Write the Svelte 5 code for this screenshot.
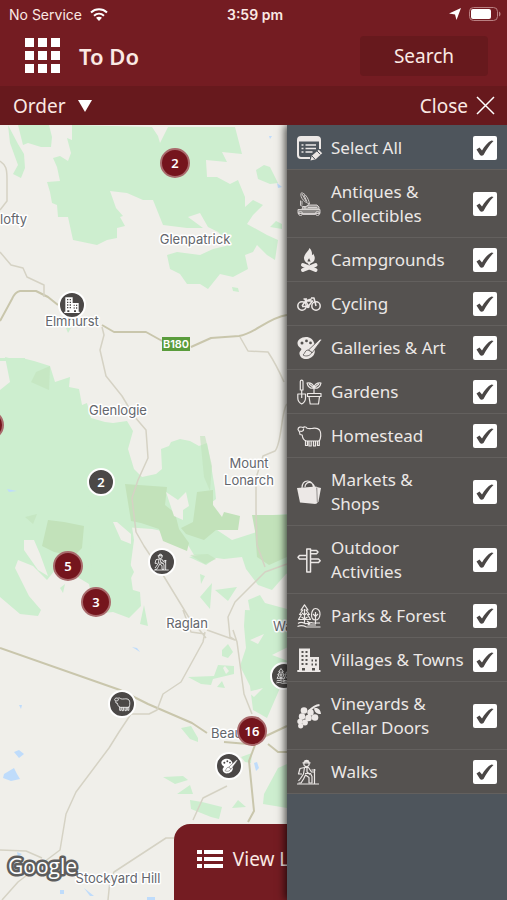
<script>
  let panelOpen = $state(true);

  // Filter categories shown in the side panel
  let categories = $state([
    { name: "Antiques & Collectibles", icon: "antiques", checked: true },
    { name: "Campgrounds", icon: "camp", checked: true },
    { name: "Cycling", icon: "cycling", checked: true },
    { name: "Galleries & Art", icon: "art", checked: true },
    { name: "Gardens", icon: "garden", checked: true },
    { name: "Homestead", icon: "sheep", checked: true },
    { name: "Markets & Shops", icon: "bag", checked: true },
    { name: "Outdoor Activities", icon: "sign", checked: true },
    { name: "Parks & Forest", icon: "forest", checked: true },
    { name: "Villages & Towns", icon: "town", checked: true },
    { name: "Vineyards & Cellar Doors", icon: "grapes", checked: true },
    { name: "Walks", icon: "walk", checked: true },
  ]);

  let allChecked = $derived(categories.every((c) => c.checked));

  // Markers, positioned from the top left of the map
  const markers = [
    { x: 175, y: 38, count: 2, cluster: true },
    { x: 72, y: 180, icon: "town", label: "Elmhurst" },
    { x: -11, y: 300, cluster: true, label: "More places" },
    { x: 101, y: 357, count: 2 },
    { x: 68, y: 441, count: 5, cluster: true },
    { x: 96, y: 477, count: 3, cluster: true },
    { x: 162, y: 437, icon: "walk", label: "Walk" },
    { x: 122, y: 579, icon: "sheep", label: "Homestead" },
    { x: 284, y: 551, icon: "forest", label: "Forest" },
    { x: 252, y: 606, count: 16, cluster: true },
    { x: 229, y: 641, icon: "art", label: "Gallery" },
  ];

  const places = [
    { x: 0, y: 99, name: "lofty", anchor: "start" },
    { x: 195, y: 119, name: "Glenpatrick" },
    { x: 72, y: 201, name: "Elmhurst" },
    { x: 118, y: 290, name: "Glenlogie" },
    { x: 249, y: 343, name: "Mount" },
    { x: 249, y: 360, name: "Lonarch" },
    { x: 187, y: 503, name: "Raglan" },
    { x: 273, y: 506, name: "Waubra", anchor: "start" },
    { x: 211, y: 613, name: "Beaufort", anchor: "start" },
    { x: 118, y: 758, name: "Stockyard Hill" },
  ];

  function toggleAll() {
    const next = !allChecked;
    categories.forEach((c) => (c.checked = next));
  }
</script>

{#snippet icon(name)}
  <svg class="icon" viewBox="0 0 24 24" aria-hidden="true">
    {#if name === "list"}
      <path d="M13 22H4a3 3 0 0 1-3-3V4a3 3 0 0 1 3-3h16a3 3 0 0 1 3 3v9" class="line bold" />
      <path d="M1 2h22v3.500H1z" />
      <path d="M4.500 9h2M8.500 9h10.500M4.500 12.500h2M8.500 12.500h10.500M4.500 16h2M8.500 16h7" class="line" />
      <path d="M13.500 24.500l1.300-4.800 7-6 3.400 3.500-6.500 6z" />
      <path d="M20 15l3.300 3.400M15 20l3 3.200" stroke="#4e555c" />
    {:else if name === "antiques"}
      <g class="line thin" opacity=".9">
        <path d="M4.500.8c-2 2 .5 9 8 11M4.500.8c3 .2 7 5 8 11M5 2l4 7M7 3l3 7M12.500 12l-3 2.500" />
        <path d="M3.500 8.500v5l5 2M5 8.800v4" />
        <path d="M9 14.500l2-1.500h9l2 2v2H5l1-2.500z" fill="currentColor" fill-opacity=".5" />
        <path d="M1 17.500h22v4H1z" fill="currentColor" fill-opacity=".4" />
        <circle cx="3.500" cy="21.500" r="2" />
        <circle cx="20.500" cy="21.500" r="2" />
        <path d="M5.500 22.500h13M11 15.500h9M8 15v2" />
      </g>
    {:else if name === "camp"}
      <path d="M12.500 0c-.8 3-5 5.500-5.500 9.500-.3 3.300 2 5.500 3.800 5.800-.6-2 0-3.500 1.400-5 .3 1.800 2.100 3 1.300 5 2.200-.5 4.700-2.500 4.200-6-.3-1.800-1-2.500-1.500-3.800-.3 1-.7 1.500-1.300 1.800C15.300 4.500 14.500 2 12.500 0z" />
      <path d="M6 17l12.500 5M18.500 17L6 22" stroke="currentColor" stroke-width="4" stroke-linecap="round" />
      <path d="M9.500 13.500l2.700 4 2.700-4z" />
    {:else if name === "cycling"}
      <g class="line">
        <circle cx="5" cy="14" r="4.200" />
        <circle cx="19" cy="14" r="4.200" />
        <path d="M5 14l3.500-5h7L11 14.500H5M8 7.500l3.500 7M14 6H17L19 14M6.500 7h3.500M8.500 9l6-2" />
        <circle cx="11" cy="14.500" r="1" />
      </g>
    {:else if name === "art"}
      <path
        fill-rule="evenodd"
        d="M9 1C4 1 .3 4 .5 7.500c.2 2.600 2 3.500 3.500 5s-2 2.500-1.500 5.500C3 21.500 6.500 23.500 10 23c4.500-.6 8-4 7.800-8-.1-1.500-.8-2.500-1.800-3.500l1.500-3.500C16.500 3.500 13 1 9 1zM5 5.500a1.500 1.500 0 1 0 0 3 1.500 1.500 0 0 0 0-3zM9.500 3.500a1.400 1.400 0 1 0 0 2.800 1.400 1.400 0 0 0 0-2.800zM13.500 5.500a1.400 1.400 0 1 0 0 2.800 1.400 1.400 0 0 0 0-2.800z"
      />
      <path d="M25 3.500L15 17l-3.500-3L23 3z" stroke="#555250" stroke-width=".8" />
      <path d="M11 14c-3 0-3 3.500-5 5 3 2 8 .8 8.800-3z" stroke="#555250" stroke-width=".8" />
    {:else if name === "garden"}
      <g class="line mid">
        <path d="M3.300 1.500a1.300 1.300 0 0 1 2.700 0v8.500H3.300zM4.700 10v8M.8 14h7.700v4c0 3-2 5-3.800 6-1.900-1-3.900-3-3.900-6z" />
        <path d="M10.500 13.500H24v3H10.500zM12 16.500h10.500L21.500 24h-8.300z" />
        <path d="M17 13V7.500M17 8c0-3.500-3-5.500-7-5C10.500 6.500 13.500 9 17 8zM17 8c0-3.500 3-5.500 7-5C23.500 6.500 20.500 9 17 8zM12 4l5 4M22 4l-5 4" />
      </g>
    {:else if name === "sheep"}
      <g class="line mid">
        <path d="M2.500 8L1 5.500C1 3 4 2.500 6 3.500c1.500-1 3.500-.5 4 .7 2 .6 3.500.3 5.500.2 2.500-.4 5.500-.2 7 1.600 1.500 2 1.300 6 .8 8.500l-1 2.500H9.500c-2.500-.5-4-3-4.300-6L3 10.500z" />
        <path d="M2.500 7c2.500 1 4.500 0 4-2.500" />
        <path d="M8.500 16v5.500h2V17M12 17v5h2.200v-5M16.500 17v5h2v-5M20.500 17v4.500h1.800V16" />
      </g>
    {:else if name === "bag"}
      <path d="M0 8l19.500-1.500L21 21l-2.500 3L3 22.500z" />
      <path d="M19.500 7l4.500 1-2.500 13.500-2.500 2.500z" />
      <path d="M19.800 8l.5 14" stroke="#555250" stroke-width=".6" />
      <path d="M5 8c0-4 2-7 5.500-7S16 3.500 16.500 7.500M8 7c0-3 2.500-5 5-4.500s4 2.500 4.500 4.500" class="line mid" />
    {:else if name === "sign"}
      <g class="line">
        <path d="M9.800 24V1h3.700v23z" />
        <path d="M13.500 2.500h6L21 4l-1.500 1.800h-6M9.800 7.500H2.500L1 9.200 2.500 11h7.300M13.500 11h8l1.700 1.700-1.700 1.800h-8" />
      </g>
    {:else if name === "forest"}
      <g class="line mid">
        <path d="M7.500.8L4 6h1.800L2.500 10.500h2L1.500 15.500h12L10.500 10.500h2L9 6h2zM7.500 5v14M5 9l2.500 2 2.500-2M4.500 13l3 2 3-2" />
        <path d="M18.500 4.500c3 0 4.800 3 4.500 6s-2 5.500-4.500 5.500-4-2-4-5 1.500-6.500 4-6.500zM18.500 8v12M16 10l2.500 2.500L21 10" />
        <path d="M1 19.500c2-1.500 5-1 7 0s5-2 8-.5h7M.5 22.500c3-1.500 6-1 9 .5h14M10 17l3 2-2 2h8" />
      </g>
    {:else if name === "town"}
      <path
        fill-rule="evenodd"
        d="M2 .5h11V9h9v13h1.500v2H.3v-2H2zM4.500 3v2h2V3zm4 0v2h2V3zm-4 4v2h2V7zm4 0v2h2V7zm-4 4v2h2v-2zm4 0v2h2v-2zm-4 4v2h2v-2zm4 0v2h2v-2zM5 20v2.500h3V20zM14.500 11.500v2H16v-2zm3.500 0v2h1.800v-2zm-3.500 4v2H16v-2zm3.500 0v2h1.800v-2zM15 20v2.500h3V20z"
      />
    {:else if name === "grapes"}
      <circle cx="7" cy="6.500" r="3.300" />
      <circle cx="13.500" cy="8.500" r="3.200" />
      <circle cx="5" cy="12.500" r="3.200" />
      <circle cx="11.500" cy="14" r="3.300" />
      <circle cx="18" cy="13.500" r="3.300" />
      <circle cx="3" cy="17.500" r="2.700" />
      <circle cx="8" cy="18.500" r="2.900" />
      <circle cx="3.700" cy="21.800" r="2.600" />
      <path d="M12.500 6.500C15 4 18 1.500 22.500 1" class="line bold" />
      <path d="M17 4.500c3.500-1.500 6.500 1 7 5.500-3.500.3-6.500-1.500-7-5.500z" />
    {:else if name === "walk"}
      <g class="line mid">
        <circle cx="9.500" cy="4" r="2.700" />
        <path d="M5.500 2.800h8M7 1.800c1-2 4.500-2 5 0" />
        <path d="M7.500 7.500L3 8.500 1.500 14H5M7.500 7.500h4l3 4.500h3.500M8 13.500h5.500l1.500 3V23h-3v-5.500L8.500 15 6.500 19 4 23H1.500M7.500 7.500L6.500 14 3.500 18.500l-2 2.500M10 8v4l3 2.500" />
        <path d="M17.500 9v15M14.500 10h4M0 24h22" />
      </g>
    {/if}
  </svg>
{/snippet}

{#snippet filterRow(name, iconName, checked, onchange, highlight)}
  <li class:highlight>
    <label>
      {@render icon(iconName)}
      <span>{name}</span>
      <input type="checkbox" {checked} {onchange} />
    </label>
  </li>
{/snippet}

<div class="app">
  <div class="status">
    <div class="status-left">
      No Service
      <svg width="18" height="13" viewBox="0 0 18 13" aria-hidden="true">
        <path d="M1 4.500c4.500-4.200 11.500-4.200 16 0M4 7.700c3-2.700 7-2.700 10 0" fill="none" stroke="#fff" stroke-width="2" />
        <path d="M6 9.800c1.800-1.500 4.200-1.500 6 0L9 13z" fill="#fff" />
      </svg>
    </div>
    <div class="time">3:59 pm</div>
    <div class="status-right">
      <svg width="12" height="12" viewBox="0 0 12 12" aria-hidden="true">
        <path d="M12 0L7.500 12 6 6.500 0 5.500z" fill="#fff" />
      </svg>
      <svg width="32" height="14" viewBox="0 0 32 14" aria-hidden="true">
        <rect x=".5" y=".5" width="28" height="13" rx="4" fill="none" stroke="#b98082" />
        <rect x="2" y="2" width="20" height="10" rx="2" fill="#fff" />
        <path d="M30 4.500c2 .8 2 4.200 0 5z" fill="#b98082" />
      </svg>
    </div>
  </div>

  <header>
    <button class="menu" aria-label="Menu">
      <svg width="36" height="36" viewBox="0 0 36 36" aria-hidden="true">
        {#each [0, 13, 26] as y}
          {#each [0, 13, 26] as x}
            <rect {x} {y} width="9" height="9" fill="#fff" />
          {/each}
        {/each}
      </svg>
    </button>
    <h1>To Do</h1>
    <button class="search">Search</button>
  </header>

  <nav>
    <button>
      Order
      <svg width="14" height="12" viewBox="0 0 14 12" aria-hidden="true">
        <path d="M0 0h14L7 12z" fill="#fff" />
      </svg>
    </button>
    <button class="close" onclick={() => (panelOpen = !panelOpen)}>
      Close
      <svg width="19" height="19" viewBox="0 0 19 19" aria-hidden="true">
        <path d="M1 1l17 17M18 1L1 18" stroke="#fff" stroke-width="1.500" />
      </svg>
    </button>
  </nav>

  <main>
    <div class="map">
      <svg class="terrain" aria-hidden="true">
        <!-- drawn in screen coordinates, map starts below the bars -->
        <g transform="translate(0 -125)">
          <g fill="#cdeecf">
            <path d="M72 125v15l-5-2 4 15-3 8-8-5-7 2 4 9 3 14-13 1 3 10 2 11 5 2 1 12 10 0 5 23 24 5 10-5 10-2v-10l8-2-5-9 3-1-7-8-6-17 17 2 16 7h10l10 25 24 3h16l-15-11 12-4 8 14 10 5 12 13-17 4-13 6-23-3-10 3 3 14 10 5 7 10h13l8 5 12-15 13 3 15-8-3-14 8-3 4-7 10 10 8 5 3-20-11-5-20-11 6-9 10-10-10-5-8 7 0-10-7-17-8 4-13-7h-10l-1-17 21 2-5-10 20 2-7-27h-67l-4 8-4 8-2-7-6-9z" />
            <path d="M18 125l5 20 5-2 13 4 10 0 1-10-3-12zM8 125l2 18 8 22-5 9 8 4 4-10-1-14-6-10z" />
            <path d="M256 170l8-5 6 2 8 16-8 1-12-5zM270 227l6-6 6 3v5zM232 287l6 1 1 4-6-1z" />
            <path d="M5 357l12 3 5-2 12 3 16 5 5 16 15-5-1 10 10 2 3 16 5-2 4 15 14 4 8 1 14-2 6 10-5 18 6 20 8 8 14-3 6-5-1-20 8-3 2-4 9-3 10 2 9 5 8-3 3 16 5 30 1 10-5 4-10-1-4 6 20 22 15 10 25-8 10-8 6-9 28-2v55l-15 6-14 16-14-5-12-16-4-12-18 2-30-4-12-20-30-6-28-2-2 20 12 25-8 16 14 4 1 14-12 12-16-6-18 2-6-30-20-12-14-2-8 10-14-14-15-6-3 8 14 28 12 14-3 6-18-2-26-22-8-10H0V390l10-8z" />
            <path d="M60 588l5-4-2 9zM189 557l18-3 9 4-10 7zM200 574l5 2-4 8zM200 597l12-14-2 26zM215 590l22-3-9 14zM248 600l12-5 5 8 22 6v11l-36-3z" />
            <path d="M144 605l4 21-8-2zM245 610l42 2v60l-20 46-14-8-3-24-10-20 6-18-2-22zM222 650l6-6 5 8-5 6-6-2zM188 677l26-1 4-11 16 1v8l-21 5-2 6-10-1zM217 687l5-6 3 7zM181 728l10-2 7 12 0 4-8-3zM163 777l20-1 5 4-13 4zM177 794l13-9 3 9zM190 800l12 2 20 5-3 12-8-2-20-8zM232 808l6-8 8 7zM264 794l14-26 9-4v44l-24-4z" />
            <path d="M0 358h25v3H0zM66 328h5l-3 5zM241 757l11-4-1 10-6-1z" />
            <path d="M88 500l40 0 6 40-4 30 4 28-12 16-18-8-12-30z" />
          </g>
          <g fill="#c2e2ba">
            <path d="M125 484l42 3-2 18 10 8 4 16 10 14-2 8-24-10-4-12-18-6-10-2zM197 492l16-2 0 15 9 12 2-5 16 4-2 14-22 0-12 10-18-6-5-6 12-6zM48 520l16 2 20 4-2 22-8 8-20-4-12-6zM252 515l35 0v42l-18 8-12-8-2-26z" />
            <path d="M200 436l5 0 7 30-2 25-6-14zM36 372l14-6-1 24-18-8zM190 555l18-1 8 5-11 5zM25 517l12-3-4 10z" opacity=".6" />
          </g>
          <g fill="#f0efea">
            <path d="M166 492l12 8 8-8 3 14-6 4 0 10-9-4zM24 540l10 0 6 14 8 22-10-6-14-20zM113 522l4 0 14 12 0 10-10-4zM223 668l2-2 4 5-3 3zM250 640l14-6-6 10zM272 655l16-8v14zM248 692l15-4-9 9z" />
          </g>
          <g fill="#bfdcfb">
            <path d="M4 774l10-6 3 6 3 5-9 2-8-3zM14 752l5-2 5 4-5 4zM132 647l5 1 3 4zM7 489l10 2-8 1zM254 763l3-1 2 6-3 3zM269 136l3 0-2 3zM277 183l5 4-4 1zM60 890l4 0 0 4-4 0zM84 888l10 8-4 0zM147 897l8 0v3h-8zM17 852l5 2-4 3zM19 705l3 0-1 4z" />
          </g>
          <g class="roads">
            <path class="main" d="M0 321L12 299q3-7 8-8h16l12 6 10 8M102 325l12 7h32l18 10M191 347l20-9 28-2c16-2 28-18 48-21" />
            <path class="main" d="M0 648l120 42 28 14 44 19 15 10M224 742l24 2 20 -9 19-9M268 744l10 8h9" />
            <path class="main" d="M255 745l-6 16 5 50-6 11" />
            <path d="M252 714l-8-20-7-52-4-12M287 564l-22 8-16 16-14 14-7 15 2 20 5 3-28-10" />
            <path d="M0 252l11 13 12 3 4 9 17 8v12M0 161c6 4 7 8 7 18v22l-7 9M102 327l2 8-4 15 6 26 16 20 12 20 12 14 2 28-10 22-6 18 4 34 8 14 16 24 28 46 18 22M205 632l-2 10-22 40-18 12-6 16-8 4h-18l-12 18-10 16-33 44-10 22-6 36-16 12-26 20-16 18M0 850l26 1 16 7M108 900l2-20 4-8 52-34 8 0M193 820l10-22 24-12M183 610l8 22 14 2M287 404c-6 6-5 40-12 47l-12 5-7 22v33l1 34 8 22M240 337l8 14 20 1q8 12 16 30" />
          </g>
          <rect x="162" y="337" width="28" height="14" fill="#5a9c3c" />
          <text class="shield" x="176" y="348">B180</text>
        </g>
        {#each places as place}
          <text class="place" x={place.x} y={place.y} text-anchor={place.anchor ?? "middle"}>{place.name}</text>
        {/each}
        <text class="google" x="8" y="749">Google</text>
      </svg>

      {#each markers as marker}
        <button
          class="marker"
          class:cluster={marker.cluster}
          style="left: {marker.x}px; top: {marker.y}px"
          aria-label={marker.label}
        >
          {#if marker.icon}
            {@render icon(marker.icon)}
          {:else if marker.count}
            {marker.count}
          {/if}
        </button>
      {/each}
    </div>

    <button class="view-list">
      <svg width="26" height="20" viewBox="0 0 26 20" aria-hidden="true">
        <path d="M0 1h5v4H0zM7 1h19v4H7zM0 8h5v4H0zM7 8h19v4H7zM0 15h5v4H0zM7 15h19v4H7z" fill="#fff" />
      </svg>
      View List
    </button>

    {#if panelOpen}
      <aside>
        <ul>
          {@render filterRow("Select All", "list", allChecked, toggleAll, true)}
          {#each categories as category}
            {@render filterRow(
              category.name,
              category.icon,
              category.checked,
              () => (category.checked = !category.checked),
              false,
            )}
          {/each}
        </ul>
      </aside>
    {/if}
  </main>
</div>

<style>
  :global(body) {
    margin: 0;
  }

  .app {
    display: flex;
    flex-direction: column;
    min-height: 100vh;
    background: #741c22;
    color: #fbe9e4;
    font-family: "Noto Sans", "Open Sans", sans-serif;
  }

  button {
    border: none;
    padding: 0;
    background: none;
    color: inherit;
    font: inherit;
    cursor: pointer;
  }

  svg {
    display: block;
    flex: none;
  }

  /* Phone status bar */
  .status {
    display: grid;
    grid-template-columns: 1fr auto 1fr;
    align-items: center;
    height: 28px;
    padding: 0 6px 0 9px;
    font-family: Inter, "Liberation Sans", sans-serif;
    font-size: 14px;
  }

  .status-left,
  .status-right {
    display: flex;
    align-items: center;
    gap: 8px;
  }

  .status-right {
    justify-content: flex-end;
  }

  .time {
    font-weight: 600;
  }

  header {
    display: flex;
    align-items: center;
    height: 58px;
    padding: 0 19px 0 25px;
  }

  .menu,
  h1,
  .search {
    margin-bottom: 2px;
  }

  h1 {
    flex: 1;
    margin-top: 0;
    margin-left: 18px;
    font-size: 22px;
    font-weight: 600;
    line-height: 28px;
  }

  .search {
    width: 128px;
    height: 40px;
    border-radius: 4px;
    background: #67191d;
    font-size: 19px;
  }

  nav {
    display: flex;
    justify-content: space-between;
    align-items: center;
    height: 39px;
    padding: 0 12px 0 13px;
    background: #67191d;
    font-size: 19px;
  }

  nav button {
    display: flex;
    align-items: center;
    gap: 12px;
  }

  nav .close {
    gap: 8px;
  }

  main {
    flex: 1;
    position: relative;
    display: flex;
    justify-content: flex-end;
    overflow: hidden;
  }

  .map {
    position: absolute;
    inset: 0;
    background: #f0efea;
  }

  .terrain {
    width: 100%;
    height: 100%;
  }

  .roads path {
    fill: none;
    stroke: #d5d2c4;
    stroke-width: 1.5;
    stroke-linejoin: round;
  }

  .roads .main {
    stroke: #c9c6ac;
    stroke-width: 2;
  }

  .place {
    font: 400 13px Inter, "Liberation Sans", sans-serif;
    fill: #63666c;
    stroke: #fff;
    stroke-width: 3px;
    stroke-linejoin: round;
    paint-order: stroke;
  }

  .shield {
    font: 600 11px Inter, "Liberation Sans", sans-serif;
    fill: #fff;
    text-anchor: middle;
  }

  .google {
    font: 500 21px "Open Sans", sans-serif;
    fill: #fff;
    stroke: #5d5d5d;
    stroke-width: 5px;
    stroke-linejoin: round;
    paint-order: stroke;
  }

  .marker {
    position: absolute;
    display: flex;
    align-items: center;
    justify-content: center;
    box-sizing: border-box;
    width: 28px;
    height: 28px;
    border: 2px solid #fff;
    border-radius: 50%;
    transform: translate(-50%, -50%);
    background: #4b4847;
    color: #fff;
    font-size: 13px;
    font-weight: 600;
    line-height: 24px;
  }

  .marker.cluster {
    width: 30px;
    height: 30px;
    border-color: #a96a6c;
    background: #75151d;
  }

  .marker .icon {
    width: 16px;
    height: 16px;
  }

  .view-list {
    position: absolute;
    bottom: 0;
    left: 50%;
    display: flex;
    align-items: center;
    justify-content: center;
    gap: 10px;
    width: 160px;
    height: 76px;
    padding-bottom: 6px;
    border-radius: 16px 16px 0 0;
    transform: translateX(-50%);
    background: #741c22;
    font-size: 19px;
  }

  /* Filter panel slides over the map */
  aside {
    position: relative;
    width: 220px;
    background: #4e555c;
    box-shadow: -2px 0 8px rgba(0, 0, 0, 0.7);
  }

  ul {
    margin: 0;
    padding: 1px 0 0;
    list-style: none;
  }

  li {
    border-bottom: 1px solid #63605e;
    background: #555250;
  }

  li.highlight {
    background: #4e555c;
  }

  label {
    display: flex;
    align-items: center;
    gap: 10px;
    padding: 10px 10px 9px;
    color: #ece8e6;
    font-size: 17px;
    line-height: 24px;
    cursor: pointer;
  }

  label span {
    flex: 1;
    margin-right: -2px;
  }

  input {
    appearance: none;
    flex: none;
    width: 24px;
    height: 24px;
    margin: 0;
    border-radius: 2px;
    background: #fff;
    cursor: pointer;
  }

  input:checked {
    background: #fff
      url("data:image/svg+xml,%3Csvg xmlns='http://www.w3.org/2000/svg' viewBox='0 0 24 24'%3E%3Cpath d='M3.500 13.500l3-2 2.500 3C11.500 10 15 6 18.500 4.500L20.500 5C16.500 9 13.500 13.500 10.500 19q-2 1.500-3.500 0z' fill='%234a4645'/%3E%3C/svg%3E");
  }

  .icon {
    width: 24px;
    height: 24px;
    overflow: visible;
    fill: currentColor;
  }

  .icon .line {
    fill: none;
    stroke: currentColor;
    stroke-width: 1.5;
    stroke-linejoin: round;
  }

  .icon .bold {
    stroke-width: 2;
  }

  .icon .mid {
    stroke-width: 1.2;
  }

  .icon .thin {
    stroke-width: 0.9;
  }
</style>
